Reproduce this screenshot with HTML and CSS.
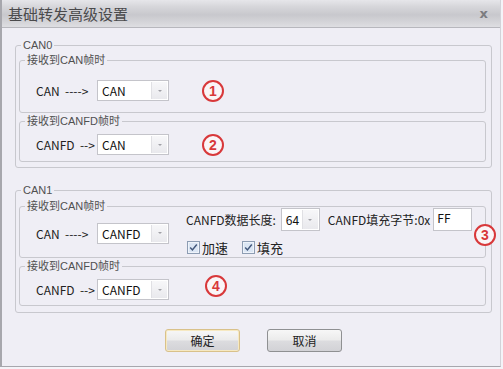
FILE: index.html
```html
<!DOCTYPE html>
<html lang="zh-CN">
<head>
<meta charset="UTF-8" />
<title>基础转发高级设置</title>
<link rel="stylesheet" href="styles.css">
</head>
<body>
<div class="window">
  <div class="titlebar">
    <span class="title">基础转发高级设置</span>
    <span class="close">x</span>
  </div>
  <div class="content">
    <!-- CAN0 -->
    <fieldset class="group group-can0">
      <legend>CAN0</legend>
      <fieldset class="sub sub1">
        <legend>接收到CAN帧时</legend>
        <div class="row">
          <span class="arrow">CAN&nbsp; ----&gt;</span>
          <div class="combo"><span class="value">CAN</span><span class="drop"></span></div>
          <span class="mark mark-a">1</span>
        </div>
      </fieldset>
      <fieldset class="sub sub2">
        <legend>接收到CANFD帧时</legend>
        <div class="row">
          <span class="arrow">CANFD&nbsp; --&gt;</span>
          <div class="combo"><span class="value">CAN</span><span class="drop"></span></div>
          <span class="mark mark-a">2</span>
        </div>
      </fieldset>
    </fieldset>

    <!-- CAN1 -->
    <fieldset class="group group-can1">
      <legend>CAN1</legend>
      <fieldset class="sub sub3">
        <legend>接收到CAN帧时</legend>
        <div class="row row-fd">
          <div class="left">
            <span class="arrow">CAN&nbsp; ----&gt;</span>
            <div class="combo"><span class="value">CANFD</span><span class="drop"></span></div>
          </div>
          <div class="options">
            <div class="opt-line">
              <span>CANFD数据长度:</span>
              <div class="combo combo-small"><span class="value">64</span><span class="drop"></span></div>
              <span class="fill-label">CANFD填充字节:0x</span>
              <div class="textbox">FF</div>
            </div>
            <div class="opt-line checks">
              <label class="check"><svg width="13" height="13" viewBox="0 0 13 13"><rect x="0.5" y="0.5" width="12" height="12" fill="#eef3fa" stroke="#8d9db3"/><rect x="2" y="2" width="9" height="9" fill="#dbe6f4"/><path d="M3.2 6.6 L5.4 8.9 L9.8 3.6" fill="none" stroke="#43587c" stroke-width="1.5"/></svg>加速</label>
              <label class="check"><svg width="13" height="13" viewBox="0 0 13 13"><rect x="0.5" y="0.5" width="12" height="12" fill="#eef3fa" stroke="#8d9db3"/><rect x="2" y="2" width="9" height="9" fill="#dbe6f4"/><path d="M3.2 6.6 L5.4 8.9 L9.8 3.6" fill="none" stroke="#43587c" stroke-width="1.5"/></svg>填充</label>
            </div>
          </div>
        </div>
      </fieldset>
      <fieldset class="sub sub4">
        <legend>接收到CANFD帧时</legend>
        <div class="row">
          <span class="arrow">CANFD&nbsp; --&gt;</span>
          <div class="combo"><span class="value">CANFD</span><span class="drop"></span></div>
          <span class="mark mark-d">4</span>
        </div>
      </fieldset>
      <span class="mark mark-c">3</span>
    </fieldset>

    <div class="buttons">
      <button class="btn btn-default">确定</button>
      <button class="btn">取消</button>
    </div>
  </div>
</div>
</body>
</html>
```

FILE: styles.css
```css
* {
  box-sizing: border-box;
}
body {
  margin: 0;
  width: 503px;
  height: 369px;
  overflow: hidden;
  background: #f4f3f8;
  font-family: "Noto Sans CJK SC", sans-serif;
  font-size: 12px;
  color: #222;
}
.window {
  width: 501px;
  height: 367px;
  background: #efeef5;
  border-left: 2px solid #a7a7ad;
  border-right: 1px solid #d2d2d8;
  border-bottom: 1px solid #a7a7ad;
}
.titlebar {
  height: 28px;
  display: flex;
  align-items: center;
  justify-content: space-between;
  padding: 0 12px 0 6px;
  background: linear-gradient(#e6e6ea 0%, #d6d6da 25%, #c8c8cd 55%, #d6d6da 85%, #dedee2 100%);
  border-bottom: 1px solid #b7b7bd;
}
.title {
  font-size: 15px;
  line-height: 20px;
  color: #4a4a4c;
}
.close {
  font: bold 13px "DejaVu Sans", sans-serif;
  color: #7c7c80;
}
.content {
  padding: 10px 8px 0 13px;
}
fieldset {
  margin: 0;
  min-width: 0;
  border: 1px solid #c8c8ce;
  border-radius: 3px;
}
legend {
  padding: 0 2px;
  font-family: "Liberation Sans", "Noto Sans CJK SC", sans-serif;
  line-height: 14px;
  color: #505050;
}
.group {
  position: relative;
  padding: 1px 5px 5px 3px;
}
.group legend {
  margin-left: 2px;
  font-size: 11px;
}
.group-can1 {
  margin-top: 15px;
  padding-top: 2px;
  padding-bottom: 6px;
}
.sub {
  padding: 0;
}
.sub legend {
  margin-left: 5px;
}
.sub1 {
  padding: 13px 0 11px;
}
.sub2 {
  margin-top: 1px;
  padding: 6px 0 6px;
}
.sub3 {
  padding: 0 0 3px;
}
.sub4 {
  margin-top: 1px;
  padding: 6px 0 5px;
}
.row {
  display: flex;
  align-items: center;
  padding-left: 16px;
}
.arrow {
  width: 61px;
  white-space: nowrap;
}
.combo {
  display: flex;
  width: 72px;
  height: 21px;
  border: 1px solid #c4c4ca;
  background: #fff;
}
.combo .value {
  flex: 1;
  padding-left: 4px;
  line-height: 19px;
  color: #111;
}
.combo .drop {
  width: 16px;
  margin: 1px;
  border-left: 1px solid #e0e0e4;
  background: linear-gradient(#f7f7f9, #e9e9ed);
  display: flex;
  align-items: center;
  justify-content: center;
}
.combo .drop::after {
  content: "";
  border-left: 2px solid transparent;
  border-right: 2px solid transparent;
  border-top: 2px solid #a0a0a6;
}
.combo-small {
  width: 39px;
  height: 23px;
  margin: 0 8px 0 5px;
}
.combo-small .value {
  line-height: 21px;
}
.row-fd {
  margin-top: -5px;
}
.left {
  display: flex;
  align-items: center;
  margin-top: 4px;
}
.options {
  margin-left: 17px;
  display: flex;
  flex-direction: column;
  gap: 9px;
}
.opt-line {
  display: flex;
  align-items: center;
}
.fill-label {
  margin-right: 3px;
}
.textbox {
  width: 39px;
  height: 23px;
  border: 1px solid #c4c4ca;
  background: #fff;
  padding: 2px 0 0 3px;
  line-height: 14px;
  color: #111;
}
.checks {
  gap: 14px;
  padding-left: 1px;
  height: 14px;
}
.check {
  display: flex;
  align-items: center;
  gap: 2px;
  font-size: 13px;
}
.mark {
  width: 22px;
  height: 22px;
  border: 2px solid #d8383a;
  border-radius: 50%;
  background: #faf5f7;
  color: #d8383a;
  font: bold 14px/18px "Liberation Sans", sans-serif;
  text-align: center;
}
.mark-a {
  margin: -1px 0 -1px 33px;
}
.mark-d {
  align-self: flex-start;
  margin: -4px 0 0 36px;
}
.mark-c {
  position: absolute;
  left: 458px;
  top: 27px;
}
.buttons {
  display: flex;
  justify-content: center;
  gap: 27px;
  margin-top: 16px;
}
.btn {
  width: 75px;
  height: 23px;
  border: 1px solid #8f9092;
  border-radius: 3px;
  background: linear-gradient(#f7f7f7, #ebebeb 48%, #dcdcdf 52%, #d2d2d6);
  font-family: "Noto Sans CJK SC", sans-serif;
  font-size: 12px;
  color: #222;
  padding: 0;
}
.btn-default {
  border-color: #d9c18a;
  box-shadow: inset 0 0 0 1px #f6e9c2;
}
```
